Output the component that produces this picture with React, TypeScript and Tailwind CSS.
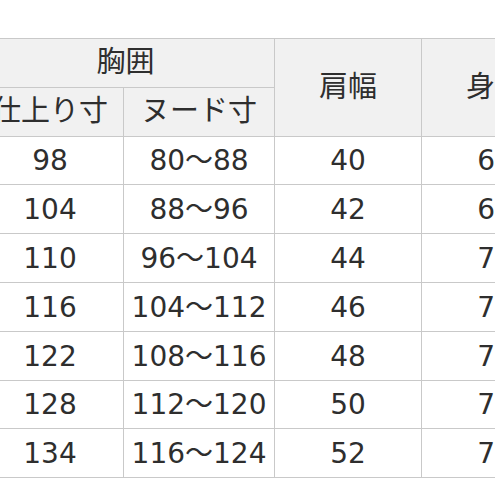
const rows = [
  ["98", "80～88", "40", "66"],
  ["104", "88～96", "42", "68"],
  ["110", "96～104", "44", "70"],
  ["116", "104～112", "46", "72"],
  ["122", "108～116", "48", "74"],
  ["128", "112～120", "50", "76"],
  ["134", "116～124", "52", "78"],
];

const font = { fontFamily: '"DejaVu Sans", "Noto Sans CJK JP", sans-serif' };

export default function App() {
  return (
    <div className="w-[495px] h-[495px] overflow-hidden bg-white">
      <div className="pt-[38px] ml-[-24px]" style={font}>
        <table className="table-fixed border-collapse text-[#2e2e2e] w-[592px]">
          <colgroup>
            <col className="w-[147px]" />
            <col className="w-[151px]" />
            <col className="w-[147px]" />
            <col className="w-[147px]" />
          </colgroup>
          <thead>
            <tr className="h-[48.8px]">
              <th colSpan={2} className="border border-[#c9c9c9] bg-[#f1f1f1] text-[29px] font-normal text-center leading-none">
                胸囲
              </th>
              <th rowSpan={2} className="border border-[#c9c9c9] bg-[#f1f1f1] text-[29px] font-normal text-center leading-none">
                肩幅
              </th>
              <th rowSpan={2} className="border border-[#c9c9c9] bg-[#f1f1f1] text-[29px] font-normal text-center leading-none">
                身丈
              </th>
            </tr>
            <tr className="h-[48.8px]">
              <th className="border border-[#c9c9c9] bg-[#f1f1f1] text-[29px] font-normal text-center leading-none">
                仕上り寸
              </th>
              <th className="border border-[#c9c9c9] bg-[#f1f1f1] text-[29px] font-normal text-center leading-none">
                ヌード寸
              </th>
            </tr>
          </thead>
          <tbody>
            {rows.map((r, i) => (
              <tr key={i} className="h-[48.8px]">
                {r.map((c, j) => (
                  <td key={j} className="border border-[#c9c9c9] text-[28px] text-center leading-none p-0 pt-[2px]">
                    {c}
                  </td>
                ))}
              </tr>
            ))}
          </tbody>
        </table>
      </div>
    </div>
  );
}
